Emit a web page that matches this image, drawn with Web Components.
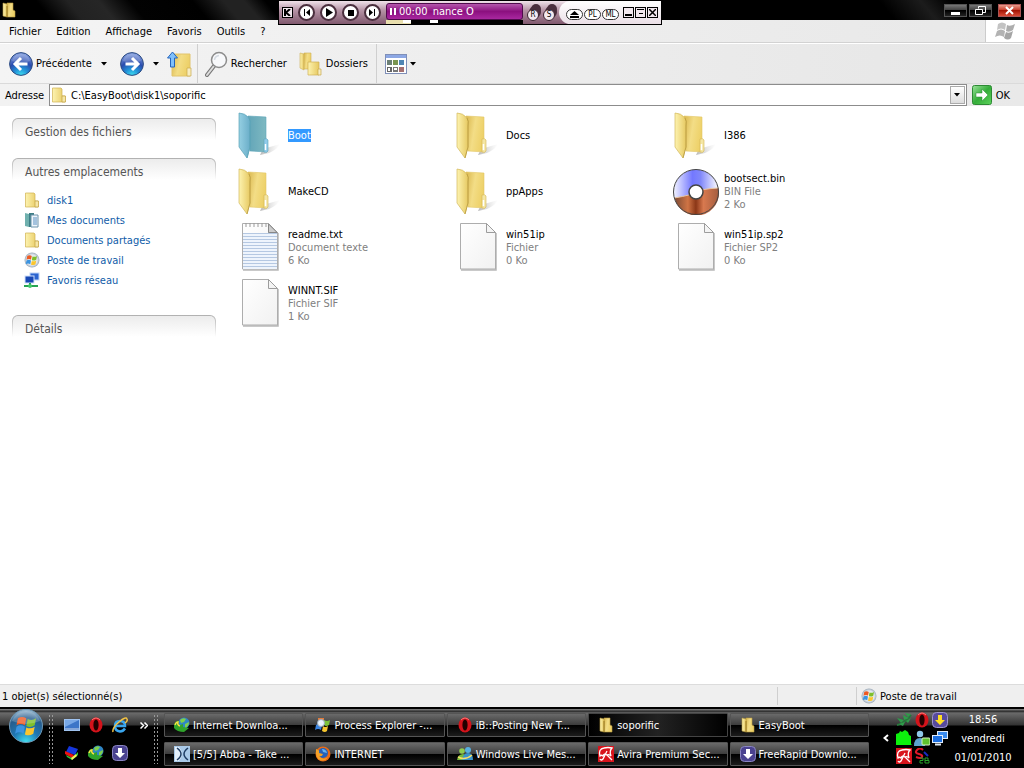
<!DOCTYPE html>
<html lang="fr">
<head>
<meta charset="utf-8">
<title>soporific</title>
<style>
    html, body { margin: 0; height: 100%; }
    body {
        font: 11px/13px "DejaVu Sans Condensed", "DejaVu Sans", Tahoma, sans-serif;
        color: #000;
        background: #fff;
        overflow: hidden;
    }
</style>
</head>
<body>
<desktop-screen>
    <title-bar slot="title"></title-bar>
    <menu-bar slot="menu">
        <a href="#">Fichier</a>
        <a href="#">Edition</a>
        <a href="#">Affichage</a>
        <a href="#">Favoris</a>
        <a href="#">Outils</a>
        <a href="#">?</a>
    </menu-bar>
    <tool-bar slot="tools"></tool-bar>
    <address-bar slot="address" value="C:\EasyBoot\disk1\soporific"></address-bar>

    <task-panel slot="side" heading="Gestion des fichiers"></task-panel>
    <task-panel slot="side" heading="Autres emplacements">
        <place-link icon="folder16">disk1</place-link>
        <place-link icon="docs16">Mes documents</place-link>
        <place-link icon="folder16">Documents partagés</place-link>
        <place-link icon="computer">Poste de travail</place-link>
        <place-link icon="network">Favoris réseau</place-link>
    </task-panel>
    <task-panel slot="side" heading="Détails"></task-panel>

    <file-item icon="folderBlue" selected>Boot</file-item>
    <file-item icon="folder48">Docs</file-item>
    <file-item icon="folder48">I386</file-item>
    <file-item icon="folder48">MakeCD</file-item>
    <file-item icon="folder48">ppApps</file-item>
    <file-item icon="disc" kind="BIN File" size="2 Ko">bootsect.bin</file-item>
    <file-item icon="text48" kind="Document texte" size="6 Ko">readme.txt</file-item>
    <file-item icon="page48" kind="Fichier" size="0 Ko">win51ip</file-item>
    <file-item icon="page48" kind="Fichier SP2" size="0 Ko">win51ip.sp2</file-item>
    <file-item icon="page48" kind="Fichier SIF" size="1 Ko">WINNT.SIF</file-item>

    <status-bar slot="status">
        1 objet(s) sélectionné(s)
        <span slot="zone">Poste de travail</span>
    </status-bar>

    <task-bar slot="taskbar">
        <task-button icon="idm">Internet Downloa...</task-button>
        <task-button icon="procexp">Process Explorer -...</task-button>
        <task-button icon="opera">iB::Posting New T...</task-button>
        <task-button icon="folderOpen" active>soporific</task-button>
        <task-button icon="folderOpen">EasyBoot</task-button>
        <task-button icon="xmedia">[5/5] Abba - Take ...</task-button>
        <task-button icon="firefox">INTERNET</task-button>
        <task-button icon="msn">Windows Live Mes...</task-button>
        <task-button icon="avira">Avira Premium Sec...</task-button>
        <task-button icon="freerapid">FreeRapid Downlo...</task-button>
    </task-bar>
</desktop-screen>

<script>
// every icon: [width, height, svg content], drawn at its natural size
const yellow = `
    <linearGradient id="y1" x1="0" x2="1"><stop offset="0" stop-color="#fdf3b0"/><stop offset="1" stop-color="#e6c860"/></linearGradient>
    <linearGradient id="y2" x1="0" x2="1" y2=".3"><stop offset="0" stop-color="#d9b64c"/><stop offset=".5" stop-color="#f3dd86"/><stop offset="1" stop-color="#edd067"/></linearGradient>
    <linearGradient id="sh" x1="0" x2="1"><stop offset="0" stop-color="#888" stop-opacity=".6"/><stop offset="1" stop-color="#bbb" stop-opacity="0"/></linearGradient>`;

const bigFolder = `
    <path d="M27 38L44 33Q42 38 33 42L24 44Z" fill="url(#sh)"/>
    <path d="M12 5L30 6V30L31 41L14 40Z" fill="url(#y2)" stroke="#e3c665" stroke-width=".6"/>
    <path d="M28 28Q31 27 32 29V40Q31 42 28 41Z" fill="#f4e6a4" stroke="#d3b654" stroke-width=".6"/>
    <path d="M29.500 33V39" stroke="#fff" stroke-width="1.500"/>
    <path d="M3 2Q9 2 13 7Q15 10 14 15V36L11 47L3 36Z" fill="url(#y1)" stroke="#d3b75c" stroke-width=".7"/>
    <path d="M13 7Q15 10 14 15V36L11 47" stroke="#b99a3c" stroke-width=".8" fill="none"/>`;

const orb = `
    <radialGradient id="o" cx=".5" cy="1" r="1"><stop offset="0" stop-color="#3fe0f0"/><stop offset=".3" stop-color="#2293d8"/><stop offset=".6" stop-color="#2a4cae"/><stop offset="1" stop-color="#8fa9e6"/></radialGradient>
    <circle cx="12" cy="12" r="11.400" fill="url(#o)" stroke="#2b4a80"/>
    <path d="M3 9Q5 2 12 2T21 9Q12 13 3 9Z" fill="#fff" opacity=".2"/>`;

const flag = `
    <path d="M1 2Q4 0 7 2L6 7Q3 5 0 7Z" fill="#ee5a22"/>
    <path d="M8 2.500Q11 4 14 2L13 7Q10 9 7 7.500Z" fill="#7fbf2b"/>
    <path d="M0 8Q3 6 6 8L5 13Q2 11 -1 13Z" fill="#3b93e0"/>
    <path d="M7 8.500Q10 10 13 8L12 13Q9 15 6 13.500Z" fill="#fbc52d"/>`;

const sheet = `
    <linearGradient id="pg" x1="0" y1="0" x2="1" y2="1"><stop offset="0" stop-color="#fff"/><stop offset="1" stop-color="#f1f1f1"/></linearGradient>
    <path d="M7 48H42V11" fill="none" stroke="#999" stroke-width="1.500" opacity=".7"/>
    <path d="M6.500 1.500H32.500L41.500 10.500V47H6.500Z" fill="url(#pg)" stroke="#adadad"/>
    <path d="M32.500 1.500V10.500H41.500Z" fill="#f4f4f4" stroke="#9c9c9c"/>`;

const opera = `<ellipse cx="8" cy="8" rx="6.500" ry="7.500" fill="#d3131b"/><ellipse cx="8" cy="8" rx="2.600" ry="5.500" fill="#200"/><path d="M4 3Q8-1 12 3" stroke="#f77" fill="none"/>`;

// umbrella: tilted canopy with a scalloped edge and a hooked handle
const avira = `<rect width="16" height="16" fill="#d8141c"/><path d="M2 10Q0 3 6 2Q10 1 14 2Q11 5 13 10Q11 8 9 9Q6 7 5 10Q3.500 8.500 2 10Z" fill="none" stroke="#fff" stroke-width="1.300"/><path d="M9 5L5 13Q3 15 2 13M9 9L14 14" fill="none" stroke="#fff" stroke-width="1.300"/>`;

const idm = `
    <circle cx="10" cy="6" r="5.500" fill="#2f86c6"/>
    <path d="M6 3Q9 0 12 2L10 5L7 6ZM11 7L15 5Q15 9 11 11Z" fill="#7fd04b"/>
    <path d="M0 8Q2 3 5 4Q3 7 6 8L9 7V10L15 11L10 15Q3 15 0 11Z" fill="#2fa32b"/>
    <path d="M1 8Q2 5 4 5Q3 8 6 9" stroke="#f7df43" stroke-width="1.500" fill="none"/>`;

const smallFolder = `${yellow}
    <path d="M1.500 1H10L11 2V9H14V15H1.500Z" fill="url(#y1)" stroke="#d0b252" stroke-width=".7"/>
    <path d="M11 9H14.500V15H11Z" fill="#f6e7a6" stroke="#c2a040" stroke-width=".7"/>`;

const monitors = `
    <rect x="6" y="1" width="9" height="7" fill="#2c65d0" stroke="#bcd4f8"/>
    <rect x="1" y="4" width="9" height="7" fill="#1747b4" stroke="#cfe0fb"/>`;

const downArrow = `<path d="M6 3H10V8H13L8 13L3 8H6Z"`;

const icons = {
    folder48: [48, 48, yellow + bigFolder],
    folderBlue: [48, 48, `
        <linearGradient id="y1" x1="0" x2="1"><stop offset="0" stop-color="#95cfe2"/><stop offset="1" stop-color="#69adc8"/></linearGradient>
        <linearGradient id="y2" x1="0" x2="1"><stop offset="0" stop-color="#62a5b8"/><stop offset="1" stop-color="#80bac2"/></linearGradient>
        <linearGradient id="sh" x1="0" x2="1"><stop offset="0" stop-color="#888" stop-opacity=".6"/><stop offset="1" stop-color="#bbb" stop-opacity="0"/></linearGradient>
        ${bigFolder.replaceAll('#f4e6a4', '#91cbea').replaceAll(/#(d3b75c|b99a3c|e3c665|d3b654)/g, '#5ca4b8')}`],
    page48: [48, 50, sheet],
    text48: [48, 50, `${sheet}
        <path d="M7 12H41V47H7Z" fill="#eef4fc"/>
        <path d="M7 11.500H41M7 14.500H41M7 17.500H41M7 20.500H41M7 23.500H41M7 26.500H41M7 29.500H41M7 32.500H41M7 35.500H41M7 38.500H41M7 41.500H41M7 44.500H41" stroke="#b5c8e2"/>
        <path d="M9 3H32" stroke="#999" stroke-width="3" stroke-dasharray="2 2"/>
        <path d="M9 3H32" stroke="#fff" stroke-width="1" stroke-dasharray="2 2"/>
        <path d="M32.500 2V10.500H41Z" fill="#ccc" stroke="#888"/>`],
    disc: [48, 48, `
        <linearGradient id="d1"><stop offset="0" stop-color="#f3f4ff"/><stop offset=".42" stop-color="#7378ff"/><stop offset=".6" stop-color="#8087fa"/><stop offset="1" stop-color="#fff"/></linearGradient>
        <linearGradient id="d2"><stop offset="0" stop-color="#7d4b34"/><stop offset=".3" stop-color="#cf7445"/><stop offset=".48" stop-color="#8b3717"/><stop offset=".65" stop-color="#d8794f"/><stop offset="1" stop-color="#a35c3e"/></linearGradient>
        <circle cx="24" cy="25" r="22.500" fill="url(#d1)"/>
        <path d="M2.500 31Q20 28 24 25T46.500 21A22.500 22.500 0 0 1 2.500 31Z" fill="url(#d2)"/>
        <path d="M2.500 31Q20 28 24 25T46.500 21" stroke="#e8c7a4" fill="none"/>
        <circle cx="24" cy="25" r="22.500" fill="none" stroke="#444"/>
        <circle cx="24" cy="25" r="7" fill="#fff" stroke="#444" stroke-width="1.500"/>`],
    folder16: [16, 16, smallFolder],
    folderOpen: [16, 16, `${yellow}
        <path d="M6 1H12V8L14 9V15H6Z" fill="url(#y2)" stroke="#b89a40" stroke-width=".6"/>
        <path d="M2 1L6 2V15L2 14Z" fill="url(#y1)" stroke="#b89a40" stroke-width=".6"/>
        <path d="M6 4V15" stroke="#9a7b22"/>`],
    docs16: [16, 16, `
        <path d="M1 1L5 2V15L1 14Z" fill="#6fb0ae"/><path d="M5 1H10V15H5Z" fill="#3f7e86"/>
        <path d="M7 3H14V15H7Z" fill="#eef5fb" stroke="#6c93ab"/>
        <path d="M9 6H13M9 8H13M9 10H13M9 12H13" stroke="#5a8fc0"/>`],
    computer: [16, 16, `
        <radialGradient id="c"><stop offset="0" stop-color="#fff"/><stop offset=".7" stop-color="#dfe6ee"/><stop offset="1" stop-color="#9eabb9"/></radialGradient>
        <circle cx="8" cy="8" r="7.500" fill="url(#c)"/><g transform="translate(2.500 2.500) scale(.75)">${flag}</g>`],
    network: [16, 16, `${monitors}<path d="M6 11V14M0 14H14" stroke="#27a453" stroke-width="2"/><circle cx="6" cy="14" r="2" fill="#42c96c"/>`],
    back: [24, 24, `${orb}<path d="M12 6L6 12L12 18M7 12H18.500" fill="none" stroke="#fff" stroke-width="3"/>`],
    forward: [24, 24, `${orb}<path d="M12 6L18 12L12 18M17 12H5.500" fill="none" stroke="#fff" stroke-width="3"/>`],
    up: [26, 26, `${yellow}
        <path d="M5 3H23V25H5Z" fill="url(#y2)" stroke="#e2c46d"/>
        <path d="M20 17H24V25H20Z" fill="#f8edc0" stroke="#c9a94b" stroke-width=".7"/>
        <path d="M5.500 1L10.500 7H7.500V16H3.500V7H.5Z" fill="#7fc0fb" stroke="#2464bd"/>`],
    search: [23, 26, `
        <path d="M9 15L2 24" stroke="#777" stroke-width="4" stroke-linecap="round"/>
        <path d="M9 15L2 24" stroke="#ddd" stroke-width="2" stroke-linecap="round"/>
        <circle cx="14" cy="9" r="7.500" fill="#f8f9fb" stroke="#8d8d8d" stroke-width="1.500"/>
        <path d="M9.500 9Q10 5 14 4.500" stroke="#d5dbe2" fill="none" stroke-width="1.500"/>`],
    folders: [24, 26, `${yellow}
        <path d="M1 2L5 3V19L1 17Z" fill="url(#y1)" stroke="#ceb055" stroke-width=".6"/>
        <path d="M5 2H12V18H5Z" fill="url(#y2)" stroke="#ceb055" stroke-width=".6"/>
        <path d="M9 11H20V24H9Z" fill="url(#y1)" stroke="#ceb055" stroke-width=".7"/>
        <path d="M19 18H22V24H19Z" fill="#f8edc0" stroke="#c9a94b" stroke-width=".7"/>`],
    views: [22, 22, `
        <rect x=".5" y="1.500" width="21" height="19" fill="#fff" stroke="#7f8fb8"/>
        <path d="M1 2H21V5H1Z" fill="#8ca7e4"/>
        <path d="M2 7H7V12H2Z" fill="#6c8076"/><path d="M8 7H13V12H8Z" fill="#7a9550"/><path d="M14 7H19V12H14Z" fill="#4f86b4"/>
        <path d="M2 14H7V19H2Z" fill="#666"/><path d="M8 14H13V19H8Z" fill="#777"/><path d="M14 14H19V19H14Z" fill="#a47070"/>
        <path d="M3 15H5V18H3ZM9 15H12V17H9Z" fill="#fff"/>`],
    arrow: [6, 4, `<path d="M0 0H6L3 3.500Z"/>`],
    go: [20, 20, `
        <linearGradient id="g" x1="0" y1="0" x2="1" y2="1"><stop offset="0" stop-color="#9be39b"/><stop offset=".5" stop-color="#35ad3a"/><stop offset="1" stop-color="#5cd25c"/></linearGradient>
        <rect x=".5" y=".5" width="19" height="19" rx="2" fill="url(#g)" stroke="#2d8a34"/>
        <path d="M10 4L16 10L10 16V12H4V8H10Z" fill="#fff" stroke="#268a30" stroke-width=".5"/>`],
    winGrey: [24, 20, `
        <path d="M5 3Q9 0 13 3L12 9Q8 6 4 9Z" fill="#c3c3c3"/><path d="M14 4Q17 6 22 3L20 9Q16 12 13 10Z" fill="#adadad"/>
        <path d="M4 10Q8 7 12 10L11 16Q7 13 2 16Z" fill="#b3b3b3"/><path d="M13 11Q16 13 20 10L18 17Q15 20 11 17Z" fill="#a5a5a5"/>`],
    start: [36, 36, `
        <radialGradient id="s" cx=".5" cy="1" r="1"><stop offset="0" stop-color="#42e3f2"/><stop offset=".4" stop-color="#1f78b4"/><stop offset=".75" stop-color="#275c8c"/><stop offset="1" stop-color="#a4c3d8"/></radialGradient>
        <circle cx="18" cy="18" r="16.500" fill="url(#s)" stroke="#6d97b5"/>
        <g transform="translate(8.500 7.500) scale(1.400)">${flag}</g>
        <path d="M4 13Q8 3 18 3T32 13Q18 19 4 13Z" fill="#fff" opacity=".2"/>`],
    desktop: [16, 16, `<rect x=".5" y="2.500" width="15" height="11" fill="#3c75c8" stroke="#9fc3f0"/><path d="M1 3H15L1 10Z" fill="#79a8e6"/><path d="M1 12H15" stroke="#cfd9e8"/>`],
    opera: [16, 16, opera],
    ie: [16, 16, `<path d="M13 11.500Q11 14.500 8 14.500Q3 14 3 9Q3 4 8 4Q13 4 13 9H4" fill="none" stroke="#3aa6ee" stroke-width="2.500"/><path d="M1 15Q0 11 7 5T15 2Q16 4 13 6" fill="none" stroke="#f3c344" stroke-width="1.500"/>`],
    books: [16, 16, `<path d="M5 1L14 4L11 10L2 7Z" fill="#1536dc"/><path d="M1 6L10 10L8 13L1 9Z" fill="#e11"/><path d="M2 10L8 13L14 7V10L8 15L3 12Z" fill="#2bc63b"/><path d="M7 13L12 9L13 11L8 15Z" fill="#f3ef57"/>`],
    idm: [16, 16, idm],
    freerapid: [16, 16, `<rect x=".5" y=".5" width="15" height="15" rx="4" fill="#4a4290" stroke="#8a84c2"/>${downArrow} fill="#fff"/>`],
    frYellow: [16, 16, `<rect x=".5" y=".5" width="15" height="15" rx="4" fill="#574a9c" stroke="#9d93cd"/>${downArrow} fill="#ffde23"/>`],
    procexp: [16, 16, `<path d="M3 1H9V7H3Z" fill="#e07a3a"/><path d="M9 3Q12 5 15 3L14 8Q11 10 9 8Z" fill="#7cc33a"/><path d="M1 8Q4 6 7 8L6 13Q3 11 0 13Z" fill="#3a84e0"/><path d="M8 9Q10 11 13 9L12 14Q10 16 7 14Z" fill="#f6c62e"/><circle cx="6" cy="6" r="3.500" fill="#eaf4fd" stroke="#9ab"/>`],
    xmedia: [16, 16, `<rect width="16" height="16" fill="#a9c9e8"/><path d="M1 1H5Q8 5 8 8T5 15H1Z" fill="#e3f0fc"/><path d="M3 2Q11 8 3 14M14 2Q6 8 14 14" fill="none" stroke="#1e3c63" stroke-width="1.500"/>`],
    firefox: [16, 16, `<circle cx="8" cy="8" r="7.500" fill="#e96a15"/><circle cx="8" cy="7" r="5" fill="#2561ba"/><path d="M7 3Q11 3 12 7L8 6Z" fill="#69b5ef"/><path d="M1 3Q5 4 4 7L8 8Q7 11 4 10Q8 15 13 11Q10 16 5 14T1 3Z" fill="#f5a126"/>`],
    msn: [16, 16, `<circle cx="5" cy="5" r="2.800" fill="#8fcb4e"/><circle cx="11" cy="4" r="3" fill="#58b0e0"/><path d="M0 14Q1 8 6 8T10 14Z" fill="#72b83c"/><path d="M5 14Q6 7 11 7T16 14Z" fill="#3992cb"/><path d="M1 11Q8 15 15 9" stroke="#f7df67" stroke-width="1.500" fill="none"/>`],
    avira: [16, 16, avira],
    vine: [16, 16, `<path d="M1 13Q8 12 15 3" stroke="#247a3a" stroke-width="2" fill="none"/><path d="M1 6L8 8L5 11ZM7 3L13 6L8 8ZM3 12L9 10L7 14ZM9 1L15 2L12 5ZM10 9L15 6L12 11Z" fill="#2f9b4a"/>`],
    green: [16, 16, `<path d="M0 4L3 3L4 1L6 2L9 0L12 2L13 5L15 6V14L16 15H0Z" fill="#0df00d"/>`],
    buddy: [16, 16, `<circle cx="6" cy="4" r="3.200" fill="#8fc7e8"/><path d="M0 16Q0 8 6 8T11 16Z" fill="#5ba2cf"/><rect x="8" y="8" width="8" height="7" rx="1" fill="#5fc22c" stroke="#d6f4c1"/>`],
    lan: [16, 16, `<rect x="5.500" y="1.500" width="10" height="7" fill="#3a8cf0" stroke="#e1edfb"/><rect x=".5" y="5.500" width="10" height="7" fill="#1c6ee0" stroke="#e1edfb"/><path d="M3 14.500H9" stroke="#dfe8f3" stroke-width="2"/>`],
    sRed: [16, 16, `<path d="M9 2Q6-1 3 2T5 6Q9 7 8 9T2 9" fill="none" stroke="#e0182a" stroke-width="2"/><path d="M10 4L14 8" stroke="#1a2cc0" stroke-width="2"/><path d="M6 10H9V12.500H6V15H9M11 10V15H15V12.500H11M14 12V10H11" fill="none" stroke="#28a428"/>`],
};

const define = (name, html, setup) => {
    const template = document.createElement('template');
    template.innerHTML = html;
    customElements.define(name, class extends HTMLElement {
        constructor() {
            super();
            this.attachShadow({ mode: 'open' }).append(template.content.cloneNode(true));
        }
        connectedCallback() {
            if (setup) setup(this, this.shadowRoot);
        }
    });
};

// swaps the <i class="icon"> placeholder for the icon named on the host
function setIcon(host, root) {
    const icon = document.createElement('ui-icon');
    icon.setAttribute('name', host.getAttribute('icon'));
    root.querySelector('.icon').replaceWith(icon);
}

define('ui-icon', `
    <style>
        :host { display: block; flex: none; }
        svg { display: block; }
    </style>
    <span></span>
`, (host, root) => {
    const [w, h, body] = icons[host.getAttribute('name')];
    root.querySelector('span').innerHTML =
        `<svg width="${w}" height="${h}" viewBox="0 0 ${w} ${h}" aria-hidden="true">${body}</svg>`;
});

define('desktop-screen', `
    <style>
        :host { display: flex; flex-direction: column; height: 100vh; }
        main { flex: 1; display: flex; min-height: 0; background: #fff; }
        aside { width: 204px; flex: none; padding: 12px 20px 0 12px; display: flex; flex-direction: column; gap: 18px; }
        .files {
            flex: 1;
            display: grid;
            grid-template-columns: repeat(auto-fill, 218px);
            grid-auto-rows: 56px;
            padding-top: 1px;
            align-content: start;
        }
    </style>
    <slot name="title"></slot>
    <slot name="menu"></slot>
    <slot name="tools"></slot>
    <slot name="address"></slot>
    <main>
        <aside><slot name="side"></slot></aside>
        <div class="files"><slot></slot></div>
    </main>
    <slot name="status"></slot>
    <slot name="taskbar"></slot>
`);

define('title-bar', `
    <style>
        :host {
            display: flex;
            position: relative;
            height: 20px;
            padding: 0 3px 0 1px;
            align-items: center;
            justify-content: space-between;
            background: linear-gradient(50deg, #000 5%, #222 8%, #262626 11%, #020202 14%, #000 20%, #222 23%, #222 25%, #000 27%, #000 86%, #1c1c1c 90%, #000 93%);
        }
        .buttons { display: flex; gap: 2px; }
        button {
            width: 23px;
            height: 13px;
            padding: 0;
            display: grid;
            place-items: center;
            border: 1px solid #555;
            background: linear-gradient(#777, #444 45%, #000 50%, #222);
        }
        .close { margin-left: 4px; border-color: #a55; background: linear-gradient(#e89a8b, #c8402e 45%, #a31505 50%, #d84a35); }
        player-bar { position: absolute; left: 278px; top: 0; z-index: 2; }
    </style>
    <ui-icon name="folderOpen"></ui-icon>
    <div class="buttons">
        <button aria-label="Réduire"><svg width="11" height="9"><path d="M1 6H10V9H1Z" fill="#fff"/></svg></button>
        <button aria-label="Restaurer"><svg width="11" height="9" fill="none" stroke="#fff"><path d="M3.500 2.500V.5H10.500V6.500H8"/><path d="M.5 3.500H7.500V8.500H.5Z"/></svg></button>
        <button class="close" aria-label="Fermer"><svg width="11" height="9"><path d="M2 1L9 8M9 1L2 8" stroke="#fff" stroke-width="2"/></svg></button>
    </div>
    <player-bar></player-bar>
`);

define('player-bar', `
    <style>
        :host {
            display: flex;
            box-sizing: border-box;
            width: 384px;
            height: 25px;
            border: 1px solid #000;
            background: linear-gradient(#f0e2ea, #b694a6 40%, #80596e);
            font-size: 8px;
            line-height: 8px;
        }
        .left { display: flex; align-items: center; gap: 5px; padding: 0 5px 0 3px; }
        button { font: inherit; padding: 0; color: #000; display: grid; place-items: center; }
        .round { width: 17px; height: 17px; border-radius: 50%; border: 2px solid #4a2e3d; background: #fff; }
        .sq { width: 11px; height: 11px; border: 1px solid #000; background: #f2e8ee; }
        .screen { width: 137px; padding-top: 2px; }
        .text {
            height: 17px;
            box-sizing: border-box;
            border: 1px solid #4f0a4c;
            border-radius: 3px;
            padding-left: 3px;
            background: linear-gradient(#b456ac, #8c107f 50%, #a928a0);
            color: #fff;
            display: flex;
            gap: 2px;
            align-items: center;
            font-size: 11px;
            line-height: 13px;
            white-space: pre;
        }
        .track { display: flex; gap: 19px; padding-left: 17px; height: 4px; background: linear-gradient(90deg, #e9dfae 25px, #000 25px); }
        .track i { width: 8px; height: 3px; background: #fff; }
        .rs { display: flex; padding-left: 4px; width: 36px; align-items: flex-end; gap: 4px; padding-bottom: 3px; box-sizing: border-box; }
        .rs button { width: 12px; height: 12px; border: 1px solid #3c2431; border-radius: 50%; background: #f4eaf0; box-shadow: 3px -6px 0 -1px #4a2e3d, 2px -3px 0 0 #4a2e3d; }
        .right { flex: 1; display: flex; align-items: center; background: linear-gradient(#fff, #eadfe6); border-radius: 12px 0 0 12px; padding: 0 3px 0 7px; justify-content: space-between; }
        .pill { height: 11px; width: 17px; border: 1px solid #333; border-radius: 6px; background: #fff; }
        .pills, .win { display: flex; gap: 1px; }
        .pills { padding-top: 4px; }
    </style>
    <div class="left">
        <button class="sq" aria-label="Menu"><svg width="7" height="7"><path d="M1 0V7M6 0L2 3.500L6 7" stroke="#000" stroke-width="2" fill="none"/></svg></button>
        <button class="round" aria-label="Précédent"><svg width="7" height="7"><path d="M1 0H2V7H1ZM7 0V7L3 3.500Z"/></svg></button>
        <button class="round" aria-label="Lecture"><svg width="8" height="9"><path d="M1 0L8 4.500L1 9Z"/></svg></button>
        <button class="round" aria-label="Arrêt"><svg width="6" height="6"><path d="M0 0H6V6H0Z"/></svg></button>
        <button class="round" aria-label="Suivant"><svg width="7" height="7"><path d="M5 0H6V7H5ZM0 0V7L4 3.500Z"/></svg></button>
    </div>
    <div class="screen">
        <div class="text"><svg width="7" height="7"><path d="M0 0H2V7H0ZM4 0H6V7H4Z" fill="#fff"/></svg><span>00:00</span><span> nance O</span></div>
        <div class="track"><i></i><i></i></div>
    </div>
    <div class="rs"><button>R</button><button>S</button></div>
    <div class="right">
        <div class="pills">
            <button class="pill" aria-label="Ejecter"><svg width="9" height="7"><path d="M0 4H9L4.500 0ZM0 5H9V7H0Z"/></svg></button>
            <button class="pill">PL</button>
            <button class="pill">ML</button>
        </div>
        <div class="win">
            <button class="sq" aria-label="Réduire"><svg width="7" height="7"><path d="M0 5H7V7H0Z"/></svg></button>
            <button class="sq" aria-label="Mode compact"><svg width="7" height="7"><path d="M0 0H7V1H0ZM2 4H6V5H2Z"/></svg></button>
            <button class="sq" aria-label="Fermer"><svg width="7" height="7"><path d="M0 0L7 7M7 0L0 7" stroke="#000" stroke-width="1.500"/></svg></button>
        </div>
    </div>
`);

define('menu-bar', `
    <style>
        :host { display: flex; height: 22px; background: linear-gradient(90deg, #f4f4f4, #e8e8e8); border-bottom: 1px solid #d2d2d2; }
        nav { flex: 1; display: flex; gap: 15px; padding-left: 9px; align-items: center; }
        ::slotted(a) { color: #000; text-decoration: none; }
        .logo { width: 38px; background: #fff; border-left: 1px solid #ccc; display: grid; place-items: center; }
    </style>
    <nav><slot></slot></nav>
    <div class="logo"><ui-icon name="winGrey"></ui-icon></div>
`);

define('tool-bar', `
    <style>
        :host { display: flex; box-sizing: border-box; height: 41px; align-items: center; background: linear-gradient(90deg, #f4f4f4, #e6e6e6); border-top: 1px solid #fff; border-bottom: 1px solid #dadada; padding-left: 9px; }
        button { display: flex; align-items: center; gap: 3px; border: 0; padding: 0; background: none; font: inherit; color: #000; }
        .drop { margin: 0 13px 0 9px; }
        .drop.near { margin-right: 8px; }
        hr { align-self: stretch; width: 1px; border: 0; margin: 0 7px 0 4px; background: #cfcfcf; }
        .wide { margin-left: 12px; }
        .wide + hr { margin: 0 8px; }
    </style>
    <button><ui-icon name="back"></ui-icon>Précédente</button>
    <button class="drop" aria-label="Historique"><ui-icon name="arrow"></ui-icon></button>
    <button aria-label="Suivante"><ui-icon name="forward"></ui-icon></button>
    <button class="drop near" aria-label="Historique suivant"><ui-icon name="arrow"></ui-icon></button>
    <button aria-label="Dossier parent"><ui-icon name="up"></ui-icon></button>
    <hr>
    <button><ui-icon name="search"></ui-icon>Rechercher</button>
    <button class="wide"><ui-icon name="folders"></ui-icon>Dossiers</button>
    <hr>
    <button aria-label="Affichage"><ui-icon name="views"></ui-icon><ui-icon name="arrow"></ui-icon></button>
`);

define('address-bar', `
    <style>
        :host { display: flex; height: 22px; align-items: center; background: linear-gradient(90deg, #f2f2f2, #e9e9e9); padding: 0 14px 0 5px; }
        label { width: 44px; }
        .box { flex: 1; display: flex; align-items: center; height: 20px; border: 1px solid #8c8c8c; background: #fff; padding: 0 1px; }
        .box > ui-icon { margin: 0 4px 0 0; }
        input { flex: 1; min-width: 0; border: 0; padding: 0; font: inherit; outline: 0; }
        .open { width: 15px; height: 18px; padding: 0; display: grid; place-items: center; border: 1px solid #aaa; background: linear-gradient(#fff, #ddd); }
        .go { display: flex; gap: 4px; align-items: center; border: 0; background: none; font: inherit; padding: 0; margin-left: 5px; color: #000; }
    </style>
    <label for="path">Adresse</label>
    <div class="box">
        <ui-icon name="folder16"></ui-icon>
        <input id="path" type="text" spellcheck="false">
        <button class="open" aria-label="Ouvrir la liste"><ui-icon name="arrow"></ui-icon></button>
    </div>
    <button class="go"><ui-icon name="go"></ui-icon>OK</button>
`, (host, root) => {
    root.querySelector('input').value = host.getAttribute('value');
});

define('task-panel', `
    <style>
        :host { display: block; }
        h2 {
            margin: 0;
            box-sizing: border-box;
            height: 22px;
            padding: 5px 0 0 12px;
            font-size: 12px;
            line-height: 16px;
            font-weight: normal;
            color: #555;
            border: 1px solid transparent;
            border-bottom: 0;
            border-radius: 6px 6px 0 0;
            background: linear-gradient(#ececec, #fff) padding-box, linear-gradient(#b0b0b0, #fff) border-box;
        }
        .body { padding: 10px 0 7px 12px; }
        .body[hidden] { display: none; }
    </style>
    <h2></h2>
    <div class="body"><slot></slot></div>
`, (host, root) => {
    root.querySelector('h2').textContent = host.getAttribute('heading');
    root.querySelector('.body').hidden = host.childElementCount === 0;
});

define('place-link', `
    <style>
        :host { display: block; }
        a { display: flex; height: 20px; align-items: center; gap: 7px; color: #0f5ca8; text-decoration: none; }
    </style>
    <a href="#"><i class="icon"></i><span><slot></slot></span></a>
`, setIcon);

define('file-item', `
    <style>
        :host { display: flex; align-items: center; gap: 4px; }
        .name { width: fit-content; }
        :host([selected]) .name { background: #3399ff; color: #fff; }
        .info { color: #808080; }
    </style>
    <i class="icon"></i>
    <div>
        <div class="name"><slot></slot></div>
    </div>
`, (host, root) => {
    setIcon(host, root);
    for (const key of ['kind', 'size']) {
        if (!host.hasAttribute(key)) continue;
        const line = document.createElement('div');
        line.className = 'info';
        line.textContent = host.getAttribute(key);
        root.querySelector('.name').parentNode.append(line);
    }
});

define('status-bar', `
    <style>
        :host { display: flex; height: 22px; align-items: center; background: #efefef; border-top: 1px solid #dcdcdc; padding-left: 2px; }
        .text { flex: 1; }
        .cell { box-sizing: border-box; border-left: 1px solid #cfcfcf; height: 18px; width: 79px; }
        .zone { width: 168px; display: flex; align-items: center; gap: 3px; padding-left: 4px; }
    </style>
    <div class="text"><slot></slot></div>
    <div class="cell"></div>
    <div class="cell zone"><ui-icon name="computer"></ui-icon><slot name="zone"></slot></div>
`);

define('task-bar', `
    <style>
        :host { display: flex; height: 61px; color: #fff; background: linear-gradient(#000 2px, #777 2px, #777 3px, #222 4px, #6a6a6a 6px, #333 18px, #000 19px); }
        .start { width: 48px; padding: 1px 0 0 8px; border: 0; background: none; display: flex; box-sizing: border-box; }
        .grip { width: 6px; margin: 7px 0 4px; background: radial-gradient(circle, #999 1px, transparent 1px) 0 0 / 3px 4px; }
        .quick { display: grid; grid-template-columns: 16px 16px 16px 16px; gap: 12px 8px; padding: 10px 1px 0 10px; align-content: start; }
        .quick button, .tray button { border: 0; padding: 0; background: none; color: #fff; font: inherit; display: grid; place-items: center; }
        .tasks {
            flex: 1;
            min-width: 0;
            display: grid;
            grid-template-columns: repeat(5, minmax(0, 1fr));
            grid-auto-rows: 24px;
            gap: 5px 2px;
            padding: 6px 0 0 5px;
        }
        .tray { display: flex; align-items: center; width: 155px; }
        .tray .more { width: 27px; padding-left: 6px; }
        .icons { display: grid; grid-template-columns: repeat(3, 16px); gap: 2px; padding-top: 5px; align-self: start; }
        time { flex: 1; text-align: center; line-height: 19px; padding: 2px 6px 0 0; }
        time span { display: block; }
    </style>
    <button class="start" aria-label="Démarrer"><ui-icon name="start"></ui-icon></button>
    <div class="grip"></div>
    <div class="quick">
        <button aria-label="Bureau"><ui-icon name="desktop"></ui-icon></button>
        <button aria-label="Opera"><ui-icon name="opera"></ui-icon></button>
        <button aria-label="Internet Explorer"><ui-icon name="ie"></ui-icon></button>
        <button aria-label="Plus"><svg width="8" height="7" fill="none" stroke="#fff" stroke-width="1.500"><path d="M.5 .5L3.500 3.500L.5 6.500M4.500 .5L7.500 3.500L4.500 6.500"/></svg></button>
        <button aria-label="Livres"><ui-icon name="books"></ui-icon></button>
        <button aria-label="Internet Download Manager"><ui-icon name="idm"></ui-icon></button>
        <button aria-label="FreeRapid"><ui-icon name="freerapid"></ui-icon></button>
    </div>
    <div class="grip"></div>
    <div class="tasks"><slot></slot></div>
    <div class="tray">
        <button class="more" aria-label="Icônes masquées"><svg width="6" height="8"><path d="M5 1L1.500 4L5 7" fill="none" stroke="#fff" stroke-width="2"/></svg></button>
        <div class="icons">
            <ui-icon name="vine"></ui-icon><ui-icon name="opera"></ui-icon><ui-icon name="frYellow"></ui-icon>
            <ui-icon name="green"></ui-icon><ui-icon name="buddy"></ui-icon><ui-icon name="lan"></ui-icon>
            <ui-icon name="avira"></ui-icon><ui-icon name="sRed"></ui-icon>
        </div>
        <time datetime="2010-01-01T18:56"><span>18:56</span><span>vendredi</span><span>01/01/2010</span></time>
    </div>
`);

define('task-button', `
    <style>
        :host { display: block; min-width: 0; }
        button {
            width: 100%;
            height: 24px;
            box-sizing: border-box;
            display: flex;
            align-items: center;
            gap: 3px;
            padding: 0 0 0 9px;
            border: 1px solid #555;
            border-radius: 1px;
            background: linear-gradient(#6a6a6a, #3c3c3c 50%, #000 52%, #1c1c1c);
            color: #fff;
            font: inherit;
            white-space: nowrap;
        }
        :host([active]) button { background: linear-gradient(90deg, #000, #222 50%, #000); border-color: #444; }
    </style>
    <button><i class="icon"></i><span><slot></slot></span></button>
`, setIcon);
</script>
</body>
</html>
